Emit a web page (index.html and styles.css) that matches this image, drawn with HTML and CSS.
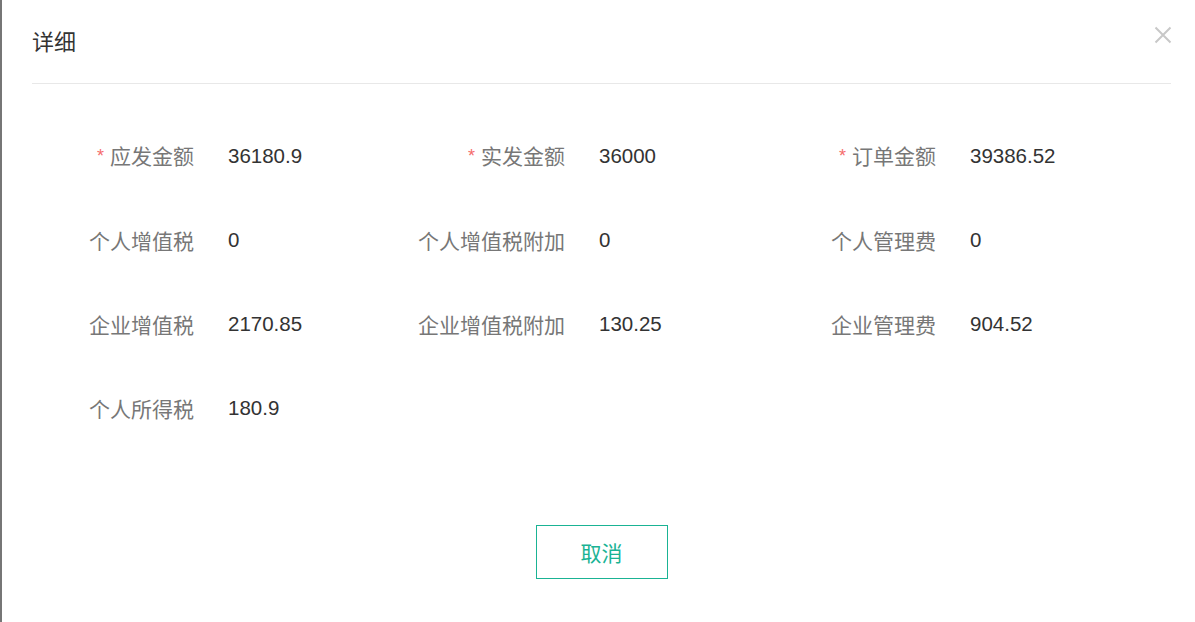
FILE: index.html
```html
<!DOCTYPE html>
<html lang="zh">
<head>
<meta charset="utf-8">
<title>详细</title>
<link rel="stylesheet" href="styles.css">
</head>
<body>
<div class="edge"></div>
<div class="dialog">
  <div class="header">
    <span class="title">详细</span>
    <span class="close" aria-label="关闭">
      <svg width="18" height="18" viewBox="0 0 18 18"><path d="M1.5 1.5 L16.5 16.5 M16.5 1.5 L1.5 16.5" stroke="#c8c8c8" stroke-width="2" fill="none"/></svg>
    </span>
  </div>
  <div class="grid">
    <div class="item"><span class="label"><i class="req">*</i>应发金额</span><span class="value">36180.9</span></div>
    <div class="item"><span class="label"><i class="req">*</i>实发金额</span><span class="value">36000</span></div>
    <div class="item"><span class="label"><i class="req">*</i>订单金额</span><span class="value">39386.52</span></div>
    <div class="item"><span class="label">个人增值税</span><span class="value">0</span></div>
    <div class="item"><span class="label">个人增值税附加</span><span class="value">0</span></div>
    <div class="item"><span class="label">个人管理费</span><span class="value">0</span></div>
    <div class="item"><span class="label">企业增值税</span><span class="value">2170.85</span></div>
    <div class="item"><span class="label">企业增值税附加</span><span class="value">130.25</span></div>
    <div class="item"><span class="label">企业管理费</span><span class="value">904.52</span></div>
    <div class="item"><span class="label">个人所得税</span><span class="value">180.9</span></div>
  </div>
  <div class="footer">
    <button class="btn">取消</button>
  </div>
</div>
</body>
</html>
```
FILE: styles.css
```css
html, body {
  margin: 0;
  padding: 0;
  background: #fff;
}
body {
  width: 1195px;
  height: 622px;
  overflow: hidden;
  display: flex;
  font-family: "Noto Sans CJK SC", "Liberation Sans", sans-serif;
}
.edge {
  width: 2px;
  background: #767676;
  flex: none;
}
.dialog {
  flex: 1;
  padding: 0 24px 0 30px;
}
.header {
  height: 83px;
  border-bottom: 1px solid #e8e8e8;
  display: flex;
  align-items: center;
  justify-content: space-between;
}
.title {
  font-size: 22px;
  color: #333;
  line-height: 1;
  margin-top: -3px;
}
.close {
  display: flex;
  margin-top: -14px;
  margin-right: -1px;
}
.grid {
  display: grid;
  grid-template-columns: repeat(3, 371px);
  grid-auto-rows: 84px;
  padding-top: 30px;
}
.item {
  display: flex;
  align-items: center;
  font-size: 20px;
  line-height: 1;
}
.label {
  width: 162px;
  text-align: right;
  color: #777;
  font-size: 21px;
  font-family: "Noto Sans CJK SC", sans-serif;
}
.req {
  font-style: normal;
  color: #f56c6c;
  font-family: "Liberation Sans", sans-serif;
  font-size: 18px;
  margin-right: 6px;
  position: relative;
  top: -2px;
}
.value {
  margin-left: 34px;
  color: #333;
  font-family: "Liberation Sans", sans-serif;
  font-size: 20.5px;
}
.footer {
  display: flex;
  justify-content: center;
  padding-top: 75px;
}
.btn {
  width: 132px;
  height: 54px;
  border: 1px solid #1ab394;
  background: #fff;
  color: #1ab394;
  font-size: 21px;
  font-family: "Noto Sans CJK SC", sans-serif;
  padding: 0;
}
```
